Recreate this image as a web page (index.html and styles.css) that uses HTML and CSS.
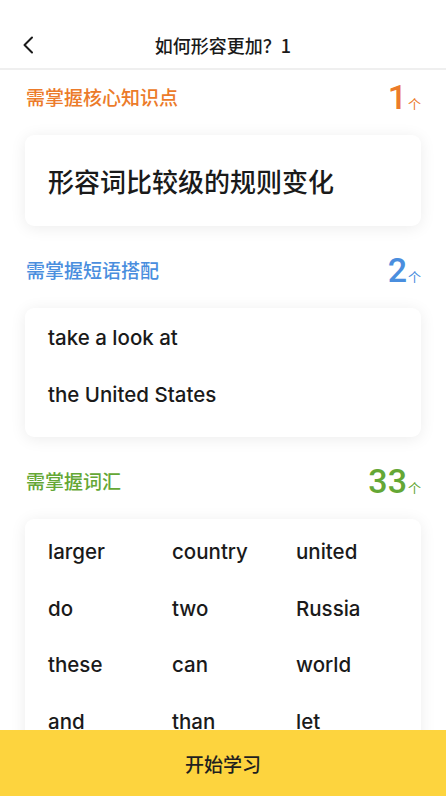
FILE: index.html
```html
<!DOCTYPE html>
<html lang="zh-CN">
<head>
<meta charset="utf-8">
<title>如何形容更加？1</title>
<link rel="stylesheet" href="styles.css">
</head>
<body>
<header class="nav">
  <svg class="back" width="14" height="18" viewBox="0 0 14 18"><path d="M11 1.5 L3.5 9 L11 16.5" fill="none" stroke="#1a1a1a" stroke-width="2" stroke-linecap="round" stroke-linejoin="round"/></svg>
  <h1 class="title">如何形容更加？1</h1>
</header>
<main class="content">
  <section class="section">
    <div class="head">
      <span class="label orange">需掌握核心知识点</span>
      <span class="count orange"><b>1</b><i>个</i></span>
    </div>
    <div class="card card-point">形容词比较级的规则变化</div>
  </section>
  <section class="section">
    <div class="head">
      <span class="label blue">需掌握短语搭配</span>
      <span class="count blue"><b>2</b><i>个</i></span>
    </div>
    <div class="card card-list">
      <div class="row">take a look at</div>
      <div class="row">the United States</div>
    </div>
  </section>
  <section class="section">
    <div class="head">
      <span class="label green">需掌握词汇</span>
      <span class="count green"><b>33</b><i>个</i></span>
    </div>
    <div class="card card-words">
      <div class="word">larger</div><div class="word">country</div><div class="word">united</div>
      <div class="word">do</div><div class="word">two</div><div class="word">Russia</div>
      <div class="word">these</div><div class="word">can</div><div class="word">world</div>
      <div class="word">and</div><div class="word">than</div><div class="word">let</div>
    </div>
  </section>
</main>
<footer class="start">开始学习</footer>
</body>
</html>
```
FILE: styles.css
```css
* { box-sizing: border-box; }
html, body { margin: 0; padding: 0; }
body {
  width: 446px;
  height: 796px;
  overflow: hidden;
  background: #ffffff;
  font-family: Inter, "Noto Sans CJK SC", sans-serif;
  color: #1a1a1a;
}
.nav {
  height: 70px;
  padding-top: 20px;
  display: flex;
  align-items: center;
  justify-content: center;
  position: relative;
  border-bottom: 2px solid #efefef;
}
.back {
  position: absolute;
  left: 21px;
  top: 36px;
}
.title {
  margin: 0;
  font-family: "Noto Sans CJK SC", sans-serif;
  font-size: 18px;
  font-weight: 500;
  color: #1a1a1a;
  line-height: 50px;
  margin-top: 1px;
}
.content {
  padding: 3px 25px 0;
  display: flex;
  flex-direction: column;
  gap: 20px;
}
.head {
  height: 46px;
  display: flex;
  align-items: center;
  justify-content: space-between;
  margin-bottom: 16px;
  padding-left: 1px;
}
.label {
  font-family: "Noto Sans CJK SC", sans-serif;
  font-size: 19px;
  font-weight: 500;
}
.count {
  display: flex;
  align-items: baseline;
  margin-top: 2px;
}
.count b {
  font-family: Roboto, "Liberation Sans", sans-serif;
  font-size: 34px;
  font-weight: 500;
  line-height: 1;
  margin-right: 1px;
}
.count i {
  font-style: normal;
  font-family: "Noto Sans CJK SC", sans-serif;
  font-size: 13px;
  font-weight: 400;
}
.orange { color: #ec7b2a; }
.blue { color: #4a8ede; }
.green { color: #64a735; }
.card {
  background: #ffffff;
  border-radius: 9px;
  box-shadow: 0 2px 16px rgba(0, 0, 0, 0.08);
}
.card-point {
  height: 91px;
  display: flex;
  align-items: center;
  padding-left: 23px;
  font-family: "Noto Sans CJK SC", sans-serif;
  font-size: 26px;
  font-weight: 500;
}
.card-list {
  padding: 10px 23px 22px;
  display: flex;
  flex-direction: column;
  gap: 17px;
}
.row {
  line-height: 40px;
  font-size: 20.5px;
  font-weight: 500;
}
.card-words {
  padding: 13px 23px 80px;
  display: grid;
  grid-template-columns: 124px 124px 1fr;
  row-gap: 16.5px;
}
.word {
  line-height: 40px;
  font-size: 20.5px;
  font-weight: 500;
}
.start {
  position: fixed;
  left: 0;
  right: 0;
  bottom: 0;
  height: 66px;
  background: #fdd43e;
  display: flex;
  align-items: center;
  justify-content: center;
  font-family: "Noto Sans CJK SC", sans-serif;
  font-size: 19px;
  font-weight: 500;
  color: #1f1f1f;
}
```
